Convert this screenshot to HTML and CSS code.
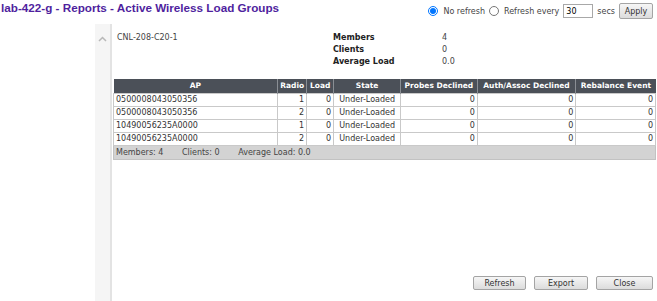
FILE: index.html
```html
<!DOCTYPE html>
<html lang="en">
<head>
    <meta charset="UTF-8">
    <title>Active Wireless Load Groups</title>
    <link rel="stylesheet" href="styles.css">
</head>
<body>
    <!-- Top bar -->
    <div class="topbar">
        <h1 class="page-title">lab-422-g - Reports - Active Wireless Load Groups</h1>
        <form class="refresh-form">
            <label class="radio-label"><input type="radio" name="refresh" checked> No refresh</label>
            <label class="radio-label"><input type="radio" name="refresh"> Refresh every</label>
            <input type="text" class="secs-input" value="30">
            <span class="secs-text">secs</span>
            <button type="button" class="btn apply-btn">Apply</button>
        </form>
    </div>

    <div class="main">
        <div class="side-strip">
            <svg class="caret" width="9" height="6" viewBox="0 0 9 6">
                <path d="M1 5 L4.5 1.5 L8 5" fill="none" stroke="#b8b8b8" stroke-width="1.5"/>
            </svg>
        </div>

        <div class="content">
            <!-- Group summary -->
            <div class="summary">
                <div class="group-name">CNL-208-C20-1</div>
                <div class="summary-stats">
                    <div class="stat-row"><span class="stat-label">Members</span><span class="stat-value">4</span></div>
                    <div class="stat-row"><span class="stat-label">Clients</span><span class="stat-value">0</span></div>
                    <div class="stat-row"><span class="stat-label">Average Load</span><span class="stat-value">0.0</span></div>
                </div>
            </div>

            <table class="ap-table">
                <thead>
                    <tr>
                        <th class="col-ap">AP</th>
                        <th class="col-radio">Radio</th>
                        <th class="col-load">Load</th>
                        <th class="col-state">State</th>
                        <th class="col-probes">Probes Declined</th>
                        <th class="col-auth">Auth/Assoc Declined</th>
                        <th class="col-rebal">Rebalance Event</th>
                    </tr>
                </thead>
                <tbody>
                    <tr>
                        <td>0500008043050356</td>
                        <td class="num">1</td>
                        <td class="num">0</td>
                        <td class="center">Under-Loaded</td>
                        <td class="num">0</td>
                        <td class="num">0</td>
                        <td class="num">0</td>
                    </tr>
                    <tr>
                        <td>0500008043050356</td>
                        <td class="num">2</td>
                        <td class="num">0</td>
                        <td class="center">Under-Loaded</td>
                        <td class="num">0</td>
                        <td class="num">0</td>
                        <td class="num">0</td>
                    </tr>
                    <tr>
                        <td>10490056235A0000</td>
                        <td class="num">1</td>
                        <td class="num">0</td>
                        <td class="center">Under-Loaded</td>
                        <td class="num">0</td>
                        <td class="num">0</td>
                        <td class="num">0</td>
                    </tr>
                    <tr>
                        <td>10490056235A0000</td>
                        <td class="num">2</td>
                        <td class="num">0</td>
                        <td class="center">Under-Loaded</td>
                        <td class="num">0</td>
                        <td class="num">0</td>
                        <td class="num">0</td>
                    </tr>
                </tbody>
                <tfoot>
                    <tr>
                        <td colspan="7">
                            <span class="foot-item">Members: 4</span>
                            <span class="foot-item">Clients: 0</span>
                            <span class="foot-item">Average Load: 0.0</span>
                        </td>
                    </tr>
                </tfoot>
            </table>

            <div class="actions">
                <button class="btn action-btn">Refresh</button>
                <button class="btn action-btn">Export</button>
                <button class="btn action-btn">Close</button>
            </div>
        </div>
    </div>
</body>
</html>
```

FILE: styles.css
```css
/* Global */
* {
    box-sizing: border-box;
}

html, body {
    height: 100%;
}

body {
    margin: 0;
    background-color: #ffffff;
    font-family: "DejaVu Sans", Verdana, sans-serif;
    font-size: 8px;
    color: #333;
    display: flex;
    flex-direction: column;
}

/* Top bar */
.topbar {
    display: flex;
    justify-content: space-between;
    align-items: center;
    height: 22px;
    padding: 0 4px 0 1px;
}

.page-title {
    margin: 0;
    font-family: "Liberation Sans", Arial, sans-serif;
    font-size: 11.7px;
    font-weight: bold;
    color: #4f1f9e;
    position: relative;
    top: -4px;
}

.refresh-form {
    display: flex;
    align-items: center;
    margin: 0;
    color: #444;
}

.radio-label {
    display: flex;
    align-items: center;
    margin-right: 4px;
}

.radio-label input {
    width: 10px;
    height: 10px;
    margin: 0 5px 0 0;
}

.secs-input {
    width: 30px;
    height: 14px;
    padding: 0 2px;
    border: 1px solid #a8a8a8;
    font-family: inherit;
    font-size: 8px;
    margin-right: 4px;
}

.secs-text {
    margin-right: 4px;
}

/* Buttons */
.btn {
    font-family: "DejaVu Sans", Verdana, sans-serif;
    font-size: 8px;
    color: #333;
    background: linear-gradient(#f6f6f6, #dcdcdc);
    border: 1px solid #a4a4a4;
    border-radius: 2px;
    padding: 0;
    cursor: pointer;
}

.apply-btn {
    width: 34px;
    height: 16px;
}

/* Main area */
.main {
    flex: 1;
    display: flex;
    margin-left: 95px;
    margin-top: 2px;
}

.side-strip {
    width: 17px;
    background-color: #f5f5f5;
    border-right: 2px solid #e3e3e3;
    text-align: center;
    padding-top: 12px;
}

.caret {
    display: block;
    margin: 0 auto;
}

.content {
    flex: 1;
    display: flex;
    flex-direction: column;
    padding-bottom: 11px;
}

/* Summary */
.summary {
    display: flex;
    padding: 9px 0 0 5px;
    height: 55px;
}

.group-name {
    width: 216px;
    color: #444;
}

.stat-row {
    display: flex;
    height: 12px;
}

.stat-label {
    width: 109px;
    font-weight: bold;
    color: #222;
}

.stat-value {
    color: #444;
}

/* Table */
.ap-table {
    width: 543px;
    border-collapse: collapse;
    margin-left: 1px;
}

.ap-table th {
    background-color: #4b5058;
    color: #ffffff;
    font-weight: bold;
    font-size: 7.5px;
    height: 14px;
    padding: 0 2px;
    border-left: 1px solid #8a8e94;
    text-align: center;
}

.ap-table th:first-child {
    border-left: none;
}

.ap-table td {
    height: 13px;
    padding: 0 2px;
    border: 1px solid #c9c9c9;
    color: #333;
    white-space: nowrap;
}

.col-ap { width: 165px; }
.col-radio { width: 28px; }
.col-load { width: 27px; }
.col-state { width: 67px; }
.col-probes { width: 77px; }
.col-auth { width: 99px; }
.col-rebal { width: 80px; }

.num {
    text-align: right;
}

.center {
    text-align: center;
}

.ap-table tfoot td {
    background-color: #d3d3d3;
    border: 1px solid #c2c2c2;
    height: 14px;
    color: #444;
}

.foot-item {
    margin-right: 16px;
}

/* Bottom actions */
.actions {
    margin-top: auto;
    display: flex;
    justify-content: flex-end;
    gap: 8px;
    padding-right: 4px;
}

.action-btn {
    width: 53px;
    height: 14px;
}

.action-btn:nth-child(2) {
    width: 54px;
}

.action-btn:nth-child(3) {
    width: 57px;
}
```
